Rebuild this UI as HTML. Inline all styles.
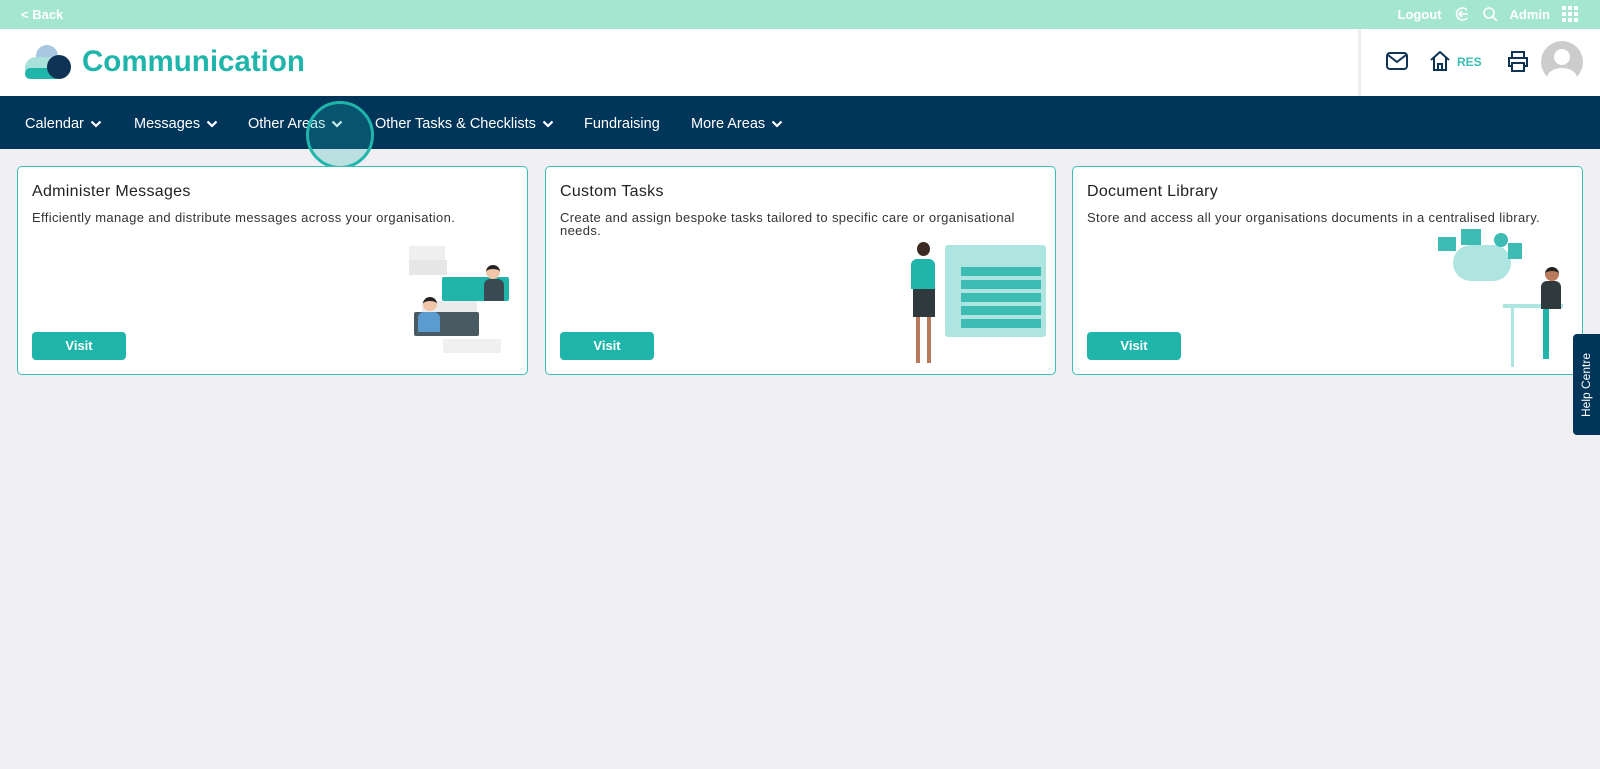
<!DOCTYPE html>
<html><head><meta charset="utf-8"><style>
*{box-sizing:border-box;margin:0;padding:0}
body{width:1600px;height:769px;background:#efeff4;font-family:"Liberation Sans",sans-serif;position:relative;overflow:hidden}
.top{height:29px;background:#a5e6d0;color:#fff;font-size:13px;font-weight:bold;position:relative}
.top .back{position:absolute;left:21px;top:7px}
.top .r{position:absolute;right:22px;top:6px;display:flex;gap:12px;align-items:center}
.hdr{height:67px;background:#fff;position:relative}
.hdr h1{position:absolute;left:82px;top:16px;font-size:29.5px;color:#1fb5ab;font-weight:bold}
.sep{position:absolute;left:1358px;top:0;width:3px;height:67px;background:#eee}
.nav{height:53px;background:#01355a;color:#fff;font-size:14.5px;position:relative}
.nav span{position:absolute;top:20px;white-space:nowrap}
.nav svg{margin-left:6px;vertical-align:middle}
.card{position:absolute;top:166px;width:511px;height:209px;background:#fff;border:1px solid #3cbcb3;border-radius:5px;overflow:hidden}
.card h2{position:absolute;left:14px;top:16px;font-size:16px;letter-spacing:.3px;font-weight:normal;color:#222}
.card p{position:absolute;left:14px;top:44px;font-size:13px;letter-spacing:.35px;color:#333;width:480px;line-height:13px}
.btn{position:absolute;left:14px;top:165px;width:94px;height:28px;background:#1fb5ab;color:#fff;border-radius:4px;font-size:13px;font-weight:bold;text-align:center;line-height:28px}
.help{position:absolute;left:1573px;top:334px;width:27px;height:101px;background:#01355a;color:#fff;font-size:12px;writing-mode:vertical-rl;transform:rotate(180deg);text-align:center;line-height:27px;border-radius:0 4px 4px 0}
.a{position:absolute}
</style></head><body>
<div class="top"><span class="back">&lt; Back</span><div class="r"><span>Logout</span><svg width="16" height="16" viewBox="0 0 16 16"><path d="M13 4A6 6 0 1 0 13 12M5 8h9M8 5L5 8l3 3" fill="none" stroke="#fff" stroke-width="1.6"/></svg><svg width="16" height="16" viewBox="0 0 16 16"><circle cx="7" cy="7" r="5" fill="none" stroke="#fff" stroke-width="1.6"/><path d="M11 11l4 4" stroke="#fff" stroke-width="1.6"/></svg><span>Admin</span><svg width="16" height="16"><g fill="#fff"><rect x="0" y="0" width="4" height="4"/><rect x="6" y="0" width="4" height="4"/><rect x="12" y="0" width="4" height="4"/><rect x="0" y="6" width="4" height="4"/><rect x="6" y="6" width="4" height="4"/><rect x="12" y="6" width="4" height="4"/><rect x="0" y="12" width="4" height="4"/><rect x="6" y="12" width="4" height="4"/><rect x="12" y="12" width="4" height="4"/></g></svg></div></div>
<div class="hdr">
<svg style="position:absolute;left:24px;top:15px" width="50" height="36"><circle cx="23" cy="12" r="11" fill="#a8c8e2"/><rect x="1" y="13" width="36" height="22" rx="11" fill="#a8e0da"/><rect x="1" y="24" width="36" height="11" rx="5" fill="#1fb5ab"/><circle cx="35" cy="23" r="12" fill="#0f3354"/></svg>
<h1>Communication</h1><div class="sep"></div>
<svg style="position:absolute;left:1386px;top:23px" width="22" height="18" viewBox="0 0 22 18"><rect x="1" y="1" width="20" height="16" rx="3" fill="none" stroke="#0f3354" stroke-width="2"/><path d="M2 3l9 7 9-7" fill="none" stroke="#0f3354" stroke-width="2"/></svg>
<svg style="position:absolute;left:1429px;top:22px" width="22" height="20" viewBox="0 0 22 20"><path d="M2 9L11 1l9 8M5 7v12h12V7M9 19v-6h4v6" fill="none" stroke="#0f3354" stroke-width="2"/></svg>
<span style="position:absolute;left:1457px;top:26px;font-size:12px;font-weight:bold;color:#3cbcb3">RES</span>
<svg style="position:absolute;left:1507px;top:22px" width="22" height="21" viewBox="0 0 22 21"><path d="M5 7V1h12v6M5 15H2V7h18v8h-3M5 12h12v8H5z" fill="none" stroke="#0f3354" stroke-width="2"/></svg>
<div style="position:absolute;left:1541px;top:12px;width:42px;height:42px;border-radius:50%;background:#ccc;overflow:hidden"><div style="position:absolute;left:13px;top:8px;width:16px;height:16px;border-radius:50%;background:#fff"></div><div style="position:absolute;left:6px;top:27px;width:30px;height:20px;border-radius:50%;background:#fff"></div></div>
</div>
<div class="nav">
<span style="left:25px">Calendar<svg width="12" height="8" viewBox="0 0 12 8"><path d="M1.5 1.5l4.5 4.5 4.5-4.5" fill="none" stroke="#fff" stroke-width="2.2"/></svg></span>
<span style="left:134px">Messages<svg width="12" height="8" viewBox="0 0 12 8"><path d="M1.5 1.5l4.5 4.5 4.5-4.5" fill="none" stroke="#fff" stroke-width="2.2"/></svg></span>
<span style="left:248px">Other Areas<svg width="12" height="8" viewBox="0 0 12 8"><path d="M1.5 1.5l4.5 4.5 4.5-4.5" fill="none" stroke="#fff" stroke-width="2.2"/></svg></span>
<span style="left:375px">Other Tasks &amp; Checklists<svg width="12" height="8" viewBox="0 0 12 8"><path d="M1.5 1.5l4.5 4.5 4.5-4.5" fill="none" stroke="#fff" stroke-width="2.2"/></svg></span>
<span style="left:584px">Fundraising</span>
<span style="left:691px">More Areas<svg width="12" height="8" viewBox="0 0 12 8"><path d="M1.5 1.5l4.5 4.5 4.5-4.5" fill="none" stroke="#fff" stroke-width="2.2"/></svg></span>
</div>
<div style="position:absolute;left:306px;top:101px;width:68px;height:68px;border-radius:50%;border:3px solid #1fb5ab;background:rgba(31,181,171,.25)"></div>
<div class="card" style="left:17px"><h2>Administer Messages</h2><p>Efficiently manage and distribute messages across your organisation.</p>
<div class="a" style="left:391px;top:79px;width:36px;height:20px;background:#efefef"></div>
<div class="a" style="left:391px;top:93px;width:38px;height:15px;background:#e6e6e6"></div>
<div class="a" style="left:404px;top:134px;width:55px;height:14px;background:#ebebeb"></div>
<div class="a" style="left:424px;top:110px;width:67px;height:24px;background:#1fb5ab;border-radius:2px"></div>
<div class="a" style="left:468px;top:98px;width:14px;height:14px;border-radius:50%;background:#f1c6a8;border-top:4px solid #222"></div>
<div class="a" style="left:466px;top:112px;width:20px;height:22px;background:#3a4a52;border-radius:6px 6px 0 0"></div>
<div class="a" style="left:396px;top:145px;width:65px;height:24px;background:#4a5a62;border-radius:2px"></div>
<div class="a" style="left:405px;top:130px;width:14px;height:14px;border-radius:50%;background:#f1c6a8;border-top:4px solid #222"></div>
<div class="a" style="left:400px;top:145px;width:22px;height:20px;background:#5b9bd0;border-radius:6px 6px 0 0"></div>
<div class="a" style="left:425px;top:172px;width:58px;height:14px;background:#f0f0f0"></div>
<div class="btn">Visit</div></div>
<div class="card" style="left:545px"><h2>Custom Tasks</h2><p>Create and assign bespoke tasks tailored to specific care or organisational needs.</p>
<div class="a" style="left:399px;top:78px;width:101px;height:92px;background:#aee5e1;border-radius:3px"></div>
<div class="a" style="left:415px;top:100px;width:80px;height:9px;background:#3cbcb3"></div><div class="a" style="left:415px;top:113px;width:80px;height:9px;background:#3cbcb3"></div><div class="a" style="left:415px;top:126px;width:80px;height:9px;background:#3cbcb3"></div><div class="a" style="left:415px;top:139px;width:80px;height:9px;background:#3cbcb3"></div><div class="a" style="left:415px;top:152px;width:80px;height:9px;background:#3cbcb3"></div>
<div class="a" style="left:371px;top:75px;width:13px;height:14px;border-radius:50%;background:#3a2a22"></div>
<div class="a" style="left:365px;top:92px;width:24px;height:30px;background:#1fb5ab;border-radius:6px 6px 0 0"></div>
<div class="a" style="left:367px;top:122px;width:22px;height:28px;background:#2f3a3f"></div>
<div class="a" style="left:370px;top:150px;width:4px;height:46px;background:#b87a5a"></div><div class="a" style="left:381px;top:150px;width:4px;height:46px;background:#b87a5a"></div>
<div class="btn">Visit</div></div>
<div class="card" style="left:1072px"><h2>Document Library</h2><p>Store and access all your organisations documents in a centralised library.</p>
<div class="a" style="left:380px;top:78px;width:58px;height:36px;background:#aee5e1;border-radius:18px"></div>
<div class="a" style="left:365px;top:70px;width:18px;height:14px;background:#3cbcb3"></div><div class="a" style="left:388px;top:62px;width:20px;height:16px;background:#3cbcb3"></div><div class="a" style="left:421px;top:66px;width:14px;height:14px;border-radius:50%;background:#3cbcb3"></div><div class="a" style="left:435px;top:76px;width:14px;height:16px;background:#3cbcb3"></div>
<div class="a" style="left:430px;top:137px;width:60px;height:4px;background:#aee5e1"></div>
<div class="a" style="left:438px;top:140px;width:3px;height:60px;background:#aee5e1"></div>
<div class="a" style="left:472px;top:100px;width:14px;height:14px;border-radius:50%;background:#b87a5a;border-top:4px solid #222"></div>
<div class="a" style="left:468px;top:114px;width:20px;height:28px;background:#2f3a3f;border-radius:6px 6px 0 0"></div>
<div class="a" style="left:470px;top:142px;width:6px;height:50px;background:#1fb5ab"></div>
<div class="btn">Visit</div></div>
<div class="help">Help Centre</div>
</body></html>
